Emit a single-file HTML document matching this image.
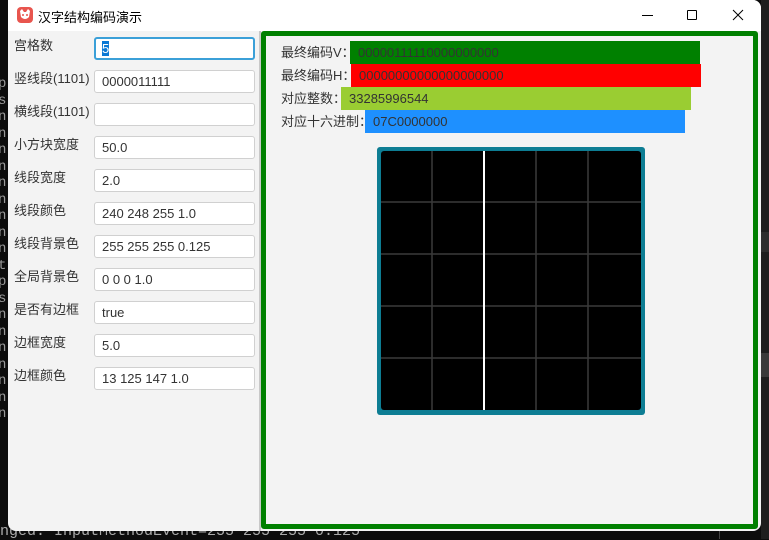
<!DOCTYPE html>
<html><head><meta charset="utf-8">
<style>
*{margin:0;padding:0;box-sizing:border-box}
body{width:769px;height:539px;overflow:hidden;background:#0c0c0c;position:relative;font-family:"Liberation Sans","Noto Sans CJK SC",sans-serif;font-size:13px;color:#333}
.abs{position:absolute}
#win{left:8px;top:0;width:753px;height:531px;background:#f3f3f3;border-radius:0 8px 8px 8px;overflow:hidden}
#title{left:0;top:0;width:753px;height:31px;background:#fff}
.lbl{position:absolute;left:6px;font-size:13px;color:#333;white-space:nowrap}
.inp{position:absolute;left:86px;width:161px;height:23px;background:#fff;border:1px solid #d0d0d0;border-radius:3px;padding-left:7px;line-height:21px;font-size:13px;color:#333}
.bar{position:absolute;height:23px;line-height:23px;padding-left:8px;font-size:13px;color:#333}
.rl{position:absolute;left:21px;font-size:13px;color:#333;line-height:23px;white-space:nowrap}
.term{position:absolute;font-family:"Liberation Mono",monospace;font-size:15px;color:#999}
</style></head><body>
<div class="term" style="left:-2px;top:76px;line-height:16.5px;width:10px;overflow:hidden;font-size:14px">p<br>s<br>n<br>n<br>n<br>n<br>n<br>n<br>n<br>n<br>n<br>t<br>p<br>s<br>n<br>n<br>n<br>n<br>n<br>n<br>n</div>
<div class="term" style="left:0;top:524px;line-height:16px;white-space:nowrap;color:#aaa">nged: InputMethodEvent=255 255 255 0.125</div>
<div class="abs" style="left:761px;top:0;width:8px;height:539px;background:#1e1e1e"></div>
<div class="abs" style="left:761px;top:232px;width:8px;height:20px;background:#2d2d2d"></div>
<div class="abs" style="left:761px;top:353px;width:8px;height:24px;background:#3a3a3a"></div>
<div class="abs" style="left:719px;top:531px;width:1px;height:8px;background:#444"></div>
<div id="win" class="abs">
 <div id="title" class="abs">
  <svg class="abs" style="left:9px;top:7px" width="16" height="16" viewBox="0 0 16 16"><rect x="0" y="0" width="16" height="16" rx="4" fill="#e8554e"/><path d="M3 4 L5 2 L7 5 L9 5 L11 2 L13 4 L12 10 Q8 14 4 10 Z" fill="#fff"/><circle cx="6" cy="8" r="1" fill="#e8554e"/><circle cx="10" cy="8" r="1" fill="#e8554e"/></svg>
  <div class="abs" style="left:30px;top:7px;font-size:13px;color:#000">汉字结构编码演示</div>
  <div class="abs" style="left:634px;top:15px;width:11px;height:1px;background:#000"></div>
  <div class="abs" style="left:679px;top:10px;width:10px;height:10px;border:1px solid #000;border-radius:1px"></div>
  <svg class="abs" style="left:724px;top:9px" width="12" height="12"><path d="M1 1L11 11M11 1L1 11" stroke="#000" stroke-width="1"/></svg>
 </div>
 <div class="abs" style="left:251px;top:31px;width:2px;height:500px;background:#c8c8c8"></div>
 <div class="lbl" style="top:35px">宫格数</div>
 <div class="inp" style="top:37px;border:2px solid #3ba0d8;padding-left:6px;line-height:19px"><span style="background:#0a78d4;color:#fff">5</span></div>
 <div class="lbl" style="top:68px">竖线段(1101)</div><div class="inp" style="top:70px">0000011111</div>
 <div class="lbl" style="top:101px">横线段(1101)</div><div class="inp" style="top:103px"></div>
 <div class="lbl" style="top:134px">小方块宽度</div><div class="inp" style="top:136px">50.0</div>
 <div class="lbl" style="top:167px">线段宽度</div><div class="inp" style="top:169px">2.0</div>
 <div class="lbl" style="top:200px">线段颜色</div><div class="inp" style="top:202px">240 248 255 1.0</div>
 <div class="lbl" style="top:233px">线段背景色</div><div class="inp" style="top:235px">255 255 255 0.125</div>
 <div class="lbl" style="top:266px">全局背景色</div><div class="inp" style="top:268px">0 0 0 1.0</div>
 <div class="lbl" style="top:299px">是否有边框</div><div class="inp" style="top:301px">true</div>
 <div class="lbl" style="top:332px">边框宽度</div><div class="inp" style="top:334px">5.0</div>
 <div class="lbl" style="top:365px">边框颜色</div><div class="inp" style="top:367px">13 125 147 1.0</div>
 <div class="abs" style="left:253px;top:31px;width:497px;height:498px;border:5px solid #008000;border-radius:3px"></div>
 <div class="rl" style="left:273px;top:41px">最终编码V：</div>
 <div class="bar" style="left:342px;top:41px;width:350px;background:#008000">00000111110000000000</div>
 <div class="rl" style="left:273px;top:64px">最终编码H：</div>
 <div class="bar" style="left:343px;top:64px;width:350px;background:#ff0000">00000000000000000000</div>
 <div class="rl" style="left:273px;top:87px">对应整数：</div>
 <div class="bar" style="left:333px;top:87px;width:350px;background:#9acd32">33285996544</div>
 <div class="rl" style="left:273px;top:110px">对应十六进制：</div>
 <div class="bar" style="left:357px;top:110px;width:320px;background:#1e90ff">07C0000000</div>
 <svg class="abs" style="left:369px;top:147px" width="269" height="269" viewBox="0 0 269 269">
  <rect x="0" y="0" width="268" height="268" rx="3" fill="#0d7d93"/>
  <rect x="4" y="4" width="260" height="259" rx="3" fill="#000"/>
  <g stroke="#3a3a3a" stroke-width="1.5">
   <line x1="55" y1="4" x2="55" y2="263"/><line x1="159" y1="4" x2="159" y2="263"/><line x1="211" y1="4" x2="211" y2="263"/>
   <line x1="4" y1="55" x2="264" y2="55"/><line x1="4" y1="107" x2="264" y2="107"/><line x1="4" y1="159" x2="264" y2="159"/><line x1="4" y1="211" x2="264" y2="211"/>
  </g>
  <line x1="107" y1="4" x2="107" y2="263" stroke="#fff" stroke-width="2"/>
 </svg>
</div>
</body></html>
